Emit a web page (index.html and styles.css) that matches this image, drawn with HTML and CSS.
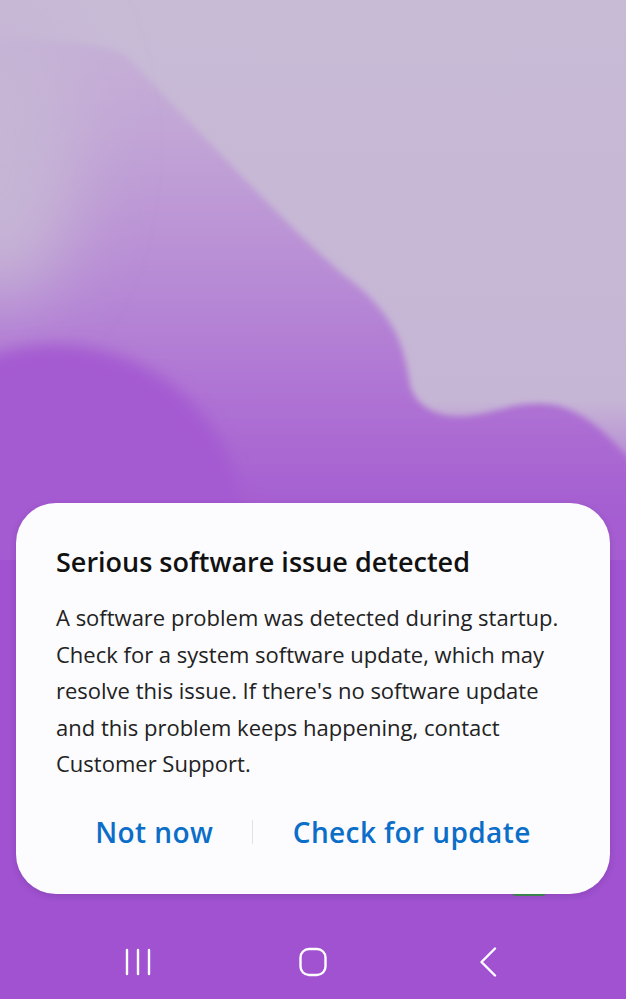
FILE: index.html
```html
<!DOCTYPE html>
<html lang="en">
<head>
    <meta charset="UTF-8">
    <meta name="viewport" content="width=device-width, initial-scale=1.0">
    <title>Serious software issue detected</title>
    <link rel="stylesheet" href="styles.css">
</head>
<body>
    <div class="screen">
        <svg class="wallpaper" viewBox="0 0 626 999" preserveAspectRatio="none">
            <defs>
                <linearGradient id="base" x1="0" y1="0" x2="0" y2="999" gradientUnits="userSpaceOnUse">
                    <stop offset="0" stop-color="#c8bbd6"/>
                    <stop offset="0.4" stop-color="#c6b6d5"/>
                    <stop offset="0.45" stop-color="#ba94d4"/>
                    <stop offset="0.5" stop-color="#a962d2"/>
                    <stop offset="0.535" stop-color="#a052d0"/>
                    <stop offset="1" stop-color="#a052d0"/>
                </linearGradient>
                <linearGradient id="hill" x1="0" y1="0" x2="0" y2="520" gradientUnits="userSpaceOnUse">
                    <stop offset="0" stop-color="#c6b4d6"/>
                    <stop offset="0.25" stop-color="#c2a6d6"/>
                    <stop offset="0.55" stop-color="#b78ad5"/>
                    <stop offset="0.8" stop-color="#ad6fd3"/>
                    <stop offset="1" stop-color="#a55dd1"/>
                </linearGradient>
                <filter id="soft" x="-20%" y="-20%" width="140%" height="140%">
                    <feGaussianBlur stdDeviation="3"/>
                </filter>
                <filter id="edge" x="-30%" y="-30%" width="160%" height="160%">
                    <feGaussianBlur stdDeviation="8"/>
                </filter>
                <filter id="haze" x="-80%" y="-80%" width="260%" height="260%">
                    <feGaussianBlur stdDeviation="35"/>
                </filter>
            </defs>
            <rect width="626" height="999" fill="url(#base)"/>
            <path filter="url(#soft)" fill="url(#hill)"
                d="M-30 40 C40 40 95 40 125 55 C195 125 270 210 340 272 C395 312 404 345 410 385 C418 412 445 420 475 415 C505 410 520 400 555 405 C595 415 615 445 640 470 L640 1000 L-30 1000 Z"/>
            <ellipse cx="0" cy="150" rx="80" ry="150" fill="#c6b5d5" filter="url(#haze)"/>
            <circle cx="55" cy="535" r="190" fill="#a45ad1" filter="url(#edge)"/>
            <rect x="0" y="560" width="626" height="439" fill="#a052d0"/>
        </svg>

        <div class="peek"></div>

        <div class="dialog">
            <h1 class="dialog-title">Serious software issue detected</h1>
            <p class="dialog-text">A software problem was detected during startup. Check for a system software update, which may resolve this issue. If there's no software update and this problem keeps happening, contact Customer Support.</p>
            <div class="dialog-actions">
                <button class="action">Not now</button>
                <span class="action-divider"></span>
                <button class="action">Check for update</button>
            </div>
        </div>

        <div class="navbar">
            <div class="nav-key">
                <svg width="30" height="30" viewBox="0 0 30 30">
                    <path d="M4 3 V27 M15 3 V27 M26 3 V27" stroke="#fff" stroke-width="2.4" stroke-linecap="round" fill="none"/>
                </svg>
            </div>
            <div class="nav-key">
                <svg width="30" height="30" viewBox="0 0 30 30">
                    <rect x="2.5" y="2" width="25" height="26" rx="8.5" stroke="#fff" stroke-width="2.4" fill="none"/>
                </svg>
            </div>
            <div class="nav-key">
                <svg width="30" height="30" viewBox="0 0 30 30">
                    <path d="M22 1.5 L8.5 15 L22 28.5" stroke="#fff" stroke-width="2.4" stroke-linecap="round" stroke-linejoin="round" fill="none"/>
                </svg>
            </div>
        </div>
    </div>
</body>
</html>
```

FILE: styles.css
```css
body {
    margin: 0;
    padding: 0;
    font-family: "Open Sans", Roboto, sans-serif;
    background-color: #a052d0;
}

.screen {
    position: relative;
    width: 626px;
    height: 999px;
    overflow: hidden;
    display: flex;
    flex-direction: column;
    justify-content: flex-end;
}

.wallpaper {
    position: absolute;
    top: 0;
    left: 0;
    width: 626px;
    height: 999px;
}

/* something green behind the dialog, just peeking out below it */
.peek {
    position: absolute;
    left: 512px;
    top: 889px;
    width: 34px;
    height: 7px;
    border-radius: 0 0 4px 4px;
    background-color: #3d8f4c;
}

.dialog {
    position: relative;
    margin: 0 16px;
    padding: 42px 40px 44px 40px;
    background-color: #fcfcfe;
    border-radius: 40px;
    box-shadow: 0 2px 6px rgba(60, 20, 90, 0.18);
}

.dialog-title {
    margin: 0;
    font-size: 27px;
    line-height: 34px;
    font-weight: 600;
    color: #111;
}

.dialog-text {
    margin: 20px 0 0 0;
    font-size: 22px;
    line-height: 36.5px;
    color: #222;
}

.dialog-actions {
    display: flex;
    align-items: center;
    margin-top: 32.5px;
}

.action {
    flex: 1 1 auto;
    padding: 0 20px;
    border: none;
    background: none;
    font-family: inherit;
    font-size: 28px;
    line-height: 36px;
    font-weight: 600;
    letter-spacing: 0.4px;
    color: #0b6ec8;
    text-align: center;
    cursor: pointer;
}

.action-divider {
    width: 1px;
    height: 24px;
    background-color: #e2e2e6;
}

.navbar {
    position: relative;
    height: 105px;
    box-sizing: border-box;
    padding-top: 53px;
    display: grid;
    grid-template-columns: repeat(3, 175px);
    justify-content: center;
}

.nav-key {
    display: flex;
    justify-content: center;
    height: 30px;
}
```
